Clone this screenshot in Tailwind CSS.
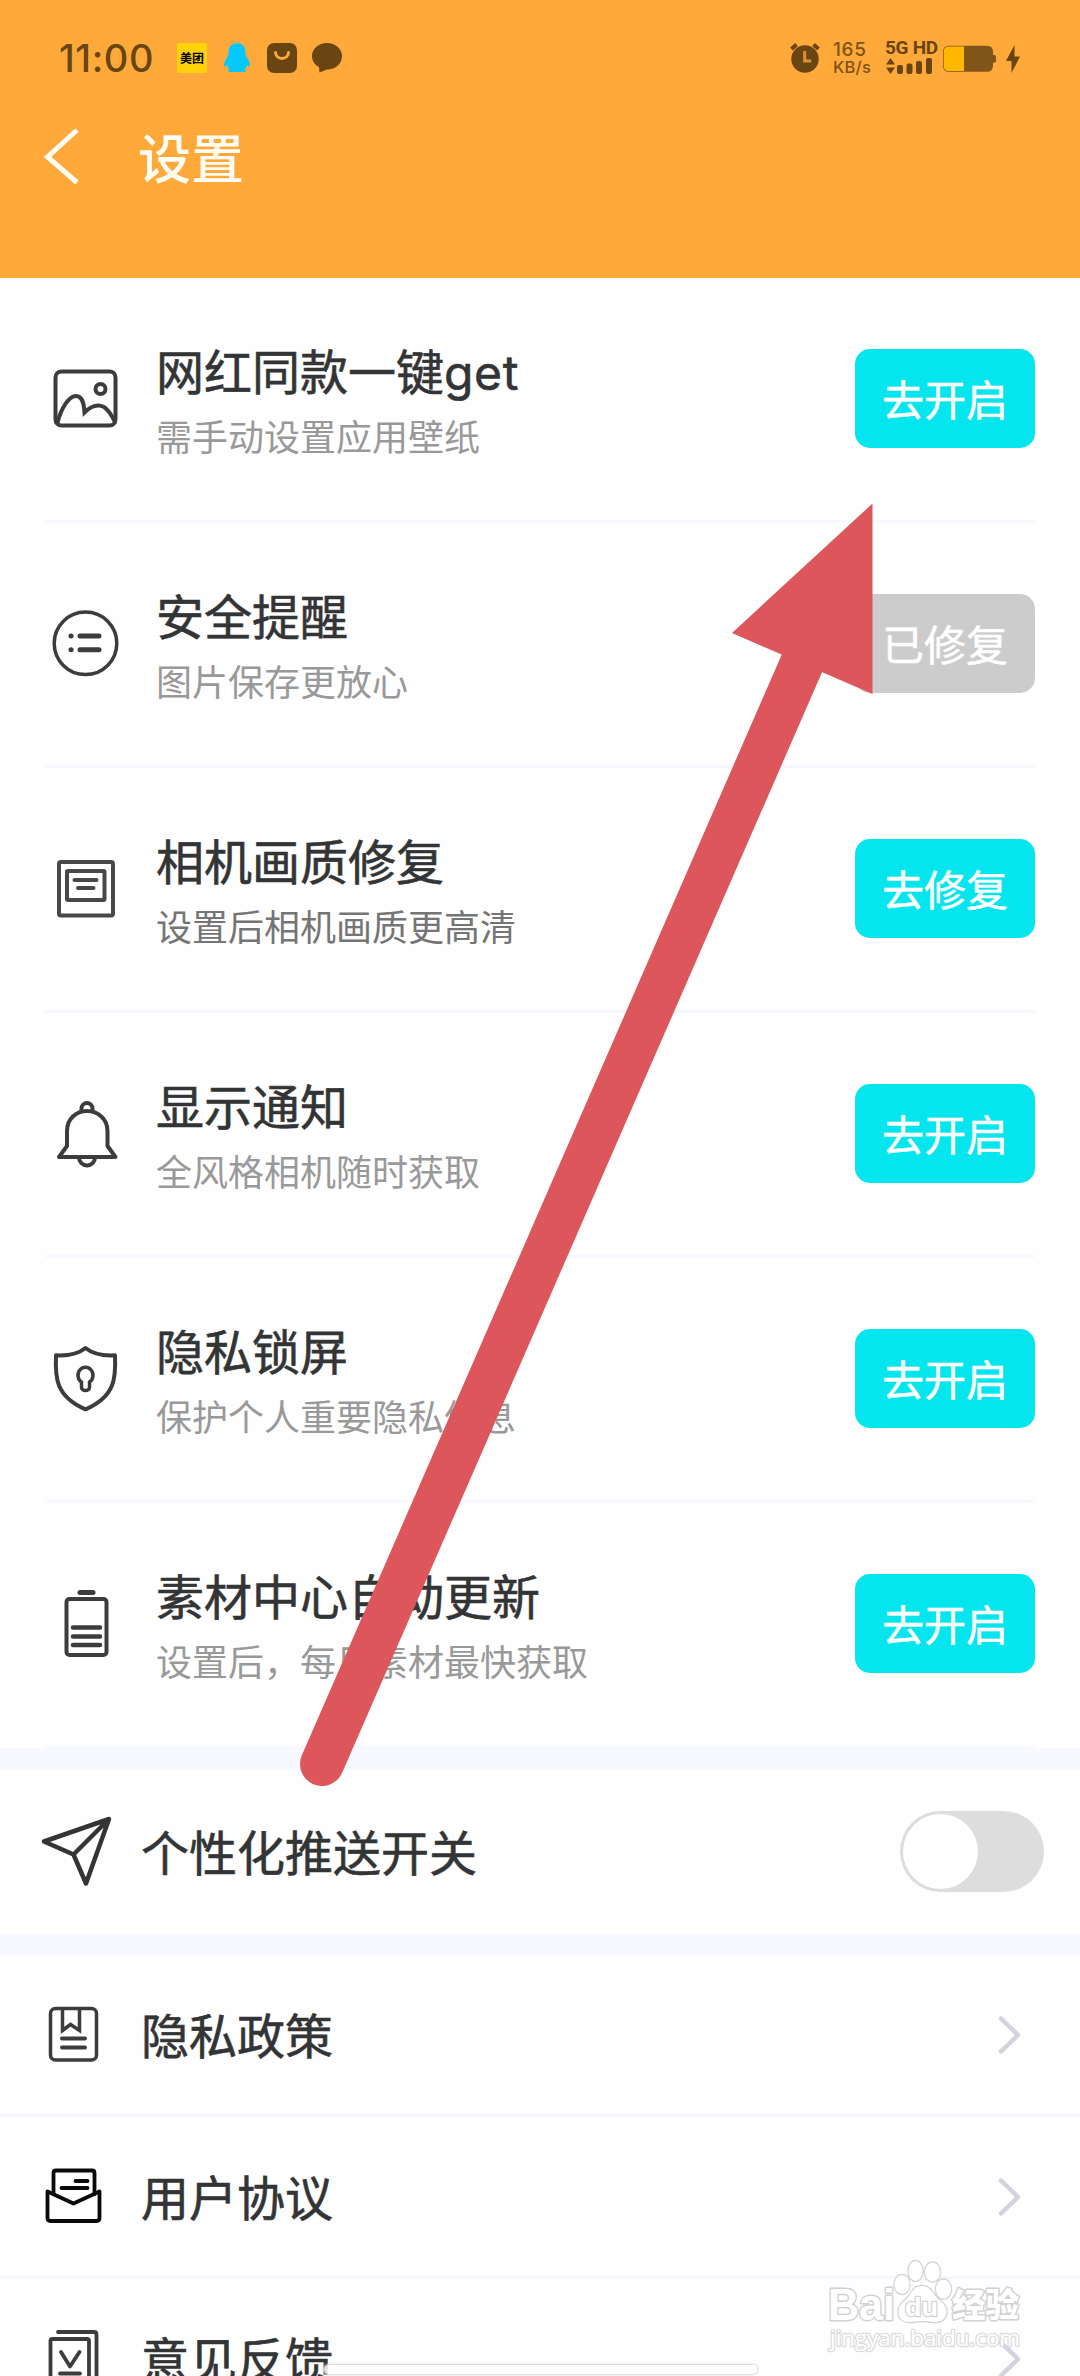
<!DOCTYPE html>
<html lang="zh-CN">
<head>
<meta charset="utf-8">
<title>设置</title>
<script src="https://cdn.jsdelivr.net/npm/@tailwindcss/browser@4"></script>
</head>
<body class="bg-[#fefefe] font-['Noto_Sans_CJK_SC',sans-serif] text-[#333436]">
<div class="relative w-[1080px] h-[2376px] overflow-hidden">

  <header class="h-[278px] bg-[#ffa93a]">
    <!-- status bar -->
    <div class="h-[116px] flex items-center justify-between pl-[59px] pr-[60px] text-[#694511]">
      <div class="flex items-center">
        <span class="w-[118px] font-[Inter,sans-serif] font-medium text-[38px] leading-none tracking-[0.6px]">11:00</span>
        <span class="w-[30px] h-[30px] rounded-[2px] bg-[#ffd20a] text-black text-[12px] font-bold leading-[30px] text-center">美团</span>
        <svg class="ml-4 w-[28px] h-[30px]" viewBox="0 0 28 30" fill="#06c8ff"><path d="M14 0C8.500 0 5.500 4 5.500 9v3C3.500 15 1 19 1 22c0 2 1.200 2 3 0 .5 2 1.200 3.200 2.500 4.300C5 27 4.500 29 6.500 29h15c2 0 1.500-2 0-2.700 1.300-1.100 2-2.300 2.500-4.300 1.800 2 3 2 3 0 0-3-2.500-7-4.500-10V9C22.500 4 19.500 0 14 0z"/></svg>
        <svg class="ml-4 w-[30px] h-[30px]" viewBox="0 0 30 30"><rect width="30" height="30" rx="7" fill="#694511"/><path d="M8.500 9.500a6.500 6 0 0 0 13 0" fill="none" stroke="#ffa93a" stroke-width="3" stroke-linecap="round"/></svg>
        <svg class="ml-[15px] w-[30px] h-[30px]" viewBox="0 0 30 30" fill="#694511"><path d="M15 0c8.300 0 15 5.800 15 13s-6 13.500-15 13.500L7.500 29.500 7 24C3 22 0 18 0 13 0 5.800 6.700 0 15 0z"/></svg>
      </div>
      <div class="flex items-center">
        <svg class="w-[30px] h-[30px]" viewBox="0 0 30 30"><circle cx="15" cy="16" r="13.700" fill="#694511"/><path d="M1.500 6 6.500 1.500M28.500 6 23.500 1.500" stroke="#694511" stroke-width="4"/><path d="M14.700 8v10h6.500" fill="none" stroke="#dc9135" stroke-width="3"/></svg>
        <div class="ml-[13px] w-[52px] font-[Inter,sans-serif] font-medium leading-[17px] text-[#7d5218]"><div class="text-[19px] tracking-[0.700px]">165</div><div class="text-[16.500px] tracking-[0.200px] pt-px">KB/s</div></div>
        <div class="w-[50px] -mt-[2px]">
          <div class="font-[Roboto,sans-serif] font-bold text-[19px] leading-[16px] whitespace-nowrap tracking-[-0.300px]">5G HD</div>
          <svg class="mt-px w-[50px] h-[18px]" viewBox="0 0 50 18" fill="#694511"><path d="M1 7.500 5.500 1 10 7.500zM1 10.500 5.500 17 10 10.500z"/><rect x="12" y="8" width="6" height="9" rx="2"/><rect x="21.500" y="6.500" width="6" height="10.500" rx="2"/><rect x="31" y="4" width="6" height="13" rx="2"/><rect x="41" y="1" width="6" height="16" rx="2"/></svg>
        </div>
        <svg class="ml-[7px] w-[55px] h-[28px] mt-[2px]" viewBox="0 0 55 28"><path d="M7 .8h38q6 0 6 6v3q3 0 3 2v4q0 2-3 2v3q0 6-6 6H7q-6 0-6-6v-14q0-6 6-6z" fill="#815519"/><path d="M22 1.500H7q-5.300 0-5.300 5.300v14q0 5.300 5.300 5.300h15z" fill="#ffb800"/></svg>
        <svg class="ml-2 -mr-px w-[16px] h-[28px] mt-[2px]" viewBox="0 0 16 28" fill="#694511"><path d="M9.500 0 1 16h5.500V28L15 11.500H9.500z"/></svg>
      </div>
    </div>
    <!-- title bar -->
    <div class="flex items-center h-[80px] pl-[42px] text-[#fffdf4]">
      <svg class="w-[40px] h-[60px]" viewBox="0 0 40 60" fill="none" stroke="currentColor" stroke-width="5"><path d="M35 4 5.500 31 35 56.500"/></svg>
      <h1 class="ml-[56px] text-[53px] leading-[60px] font-medium">设置</h1>
    </div>
  </header>

  <main>
    <section class="px-[45px]">
      <div class="h-[245px] border-b-3 border-[#f8f9fe] flex items-center">
        <svg class="ml-[5px] w-[72px] h-[72px] shrink-0" viewBox="50 363 72 72" fill="none" stroke="#3a3c3e" stroke-width="4"><rect x="55.500" y="371.500" width="60" height="54" rx="6"/><circle cx="100.500" cy="389" r="5"/><path d="M57.500 423C61 408 69 396 76 396c7 0 8 9 8.500 16.500C92 405 98 404 104 407c5 3 8 9 11 15"/></svg>
        <div class="ml-[34px] pt-[5px] flex-1"><div class="text-[48px] leading-[62px] -mt-1 [-webkit-text-stroke:0.6px_currentColor]">网红同款一键<span class="font-[Inter] text-[48px] leading-none tracking-[0.6px]">get</span></div><div class="text-[36px] leading-[52px] text-[#999] mt-[9px]">需手动设置应用壁纸</div></div>
        <button class="-mt-[2px] w-[180px] h-[99px] rounded-[15px] bg-[#05e5ed] text-white text-[42px] leading-none [-webkit-text-stroke:0.5px_white]">去开启</button>
      </div>
      <div class="h-[245px] border-b-3 border-[#f8f9fe] flex items-center">
        <svg class="ml-[5px] w-[72px] h-[72px] shrink-0" viewBox="50 608 72 72" fill="none" stroke="#3a3c3e" stroke-width="3.500" stroke-linecap="round"><circle cx="85.500" cy="643.300" r="31.300"/><path d="M80 636h19M80 649.700h19" stroke-width="5"/><path d="M71 636h.1M71 649.700h.1" stroke-width="5"/></svg>
        <div class="ml-[34px] pt-[5px] flex-1"><div class="text-[48px] leading-[62px] -mt-1 [-webkit-text-stroke:0.6px_currentColor]">安全提醒</div><div class="text-[36px] leading-[52px] text-[#999] mt-[9px]">图片保存更放心</div></div>
        <button class="-mt-[2px] w-[180px] h-[99px] rounded-[15px] bg-[#ccc] text-white text-[42px] leading-none [-webkit-text-stroke:0.5px_white]">已修复</button>
      </div>
      <div class="h-[245px] border-b-3 border-[#f5f9fe] flex items-center">
        <svg class="ml-[5px] w-[72px] h-[72px] shrink-0" viewBox="50 853 72 72" fill="none" stroke="#46484a" stroke-width="4" stroke-linecap="round"><rect x="59" y="862" width="54" height="53.500" rx="2"/><rect x="67" y="871" width="37.500" height="29" rx="1"/><path d="M74.500 880h22M78 888h15.500"/></svg>
        <div class="ml-[34px] pt-[5px] flex-1"><div class="text-[48px] leading-[62px] -mt-1 [-webkit-text-stroke:0.6px_currentColor]">相机画质修复</div><div class="text-[36px] leading-[52px] text-[#757575] mt-[9px]">设置后相机画质更高清</div></div>
        <button class="-mt-[2px] w-[180px] h-[99px] rounded-[15px] bg-[#05e5ed] text-white text-[42px] leading-none [-webkit-text-stroke:0.5px_white]">去修复</button>
      </div>
      <div class="h-[245px] border-b-3 border-[#f8f9fe] flex items-center">
        <svg class="ml-[5px] w-[72px] h-[72px] shrink-0" viewBox="50 1098 72 72" fill="none" stroke="#3a3c3e" stroke-width="4" stroke-linejoin="round"><path d="M67 1146v-15c0-12 9-20 20-20s20.500 8 20.500 20v15l8 11H59z"/><path d="M81.500 1111v-2.500a5.500 5.500 0 0 1 11 0v2.500M79 1157.500a8 8 0 0 0 16 0"/></svg>
        <div class="ml-[34px] pt-[5px] flex-1"><div class="text-[48px] leading-[62px] -mt-1 [-webkit-text-stroke:0.6px_currentColor]">显示通知</div><div class="text-[36px] leading-[52px] text-[#999] mt-[9px]">全风格相机随时获取</div></div>
        <button class="-mt-[2px] w-[180px] h-[99px] rounded-[15px] bg-[#05e5ed] text-white text-[42px] leading-none [-webkit-text-stroke:0.5px_white]">去开启</button>
      </div>
      <div class="h-[245px] border-b-3 border-[#f8f9fe] flex items-center">
        <svg class="ml-[5px] w-[72px] h-[72px] shrink-0" viewBox="50 1343 72 72" fill="none" stroke="#3a3c3e" stroke-width="4" stroke-linejoin="round"><path d="M85.500 1348c-8 6.500-17 8-29.500 7.300-1 22-.5 41 29.500 54 30-13 30.500-32 29.500-54-12.500.7-21.500-.8-29.500-7.300z"/><path d="M81.500 1382a7.500 8 0 1 1 8 0v5.500a4 3 0 0 1-8 0z" stroke-width="3.500"/></svg>
        <div class="ml-[34px] pt-[5px] flex-1"><div class="text-[48px] leading-[62px] -mt-1 [-webkit-text-stroke:0.6px_currentColor]">隐私锁屏</div><div class="text-[36px] leading-[52px] text-[#999] mt-[9px]">保护个人重要隐私信息</div></div>
        <button class="-mt-[2px] w-[180px] h-[99px] rounded-[15px] bg-[#05e5ed] text-white text-[42px] leading-none [-webkit-text-stroke:0.5px_white]">去开启</button>
      </div>
      <div class="h-[245px] border-b-3 border-[#f8f9fe] flex items-center">
        <svg class="ml-[5px] w-[72px] h-[72px] shrink-0" viewBox="50 1588 72 72" fill="none" stroke="#3a3c3e" stroke-width="4" stroke-linecap="round"><rect x="66.500" y="1599" width="40" height="56" rx="3"/><path d="M80 1592.500h13" stroke-width="5"/><path d="M73 1627.500h27M73 1636.500h27M73 1645h27" stroke-width="4.500"/></svg>
        <div class="ml-[34px] pt-[5px] flex-1"><div class="text-[48px] leading-[62px] -mt-1 [-webkit-text-stroke:0.6px_currentColor]">素材中心自动更新</div><div class="text-[36px] leading-[52px] text-[#999] mt-[9px]">设置后，每日素材最快获取</div></div>
        <button class="-mt-[2px] w-[180px] h-[99px] rounded-[15px] bg-[#05e5ed] text-white text-[42px] leading-none [-webkit-text-stroke:0.5px_white]">去开启</button>
      </div>
    </section>

    <section class="h-[207px] border-y-[21px] border-[#f8f9fe] flex items-center pl-[41px] pr-9">
      <svg class="w-[72px] h-[72px]" viewBox="41 1816 72 72" fill="none" stroke="#333436" stroke-width="4.500" stroke-linejoin="round"><path d="M109 1819 44 1841.500 73.500 1854.500 86 1883.500zL73.500 1854.500"/></svg>
      <div class="ml-[28px] -mt-[3px] flex-1 text-[48px] leading-[62px] [-webkit-text-stroke:0.6px_currentColor]">个性化推送开关</div>
      <div class="w-36 h-[81px] rounded-full bg-[#ddd] p-[3px]"><div class="size-[75px] rounded-full bg-white"></div></div>
    </section>

    <section>
      <div class="h-[162px] border-b-3 border-[#f4f8fd] flex items-center pl-[41px] pr-[59px]">
        <svg class="w-[64px] h-[64px]" viewBox="41 2003 64 64" fill="none" stroke="#3a3c3e" stroke-width="3.500" stroke-linecap="round"><rect x="50.500" y="2008.500" width="46" height="51.500" rx="5"/><path d="M62.500 2009v21.500l8-6 9 6V2009" /><path d="M62 2038.500h23M62 2047.500h23" stroke-width="4"/></svg>
        <div class="ml-[36px] -mt-[3px] flex-1 text-[48px] leading-[62px] [-webkit-text-stroke:0.6px_currentColor]">隐私政策</div>
        <svg class="w-6 h-10" viewBox="0 0 24 40" fill="none" stroke="#d3d3df" stroke-width="4.500" stroke-linecap="round" stroke-linejoin="round"><path d="M4 3.500 21 20 4 36.500"/></svg>
      </div>
      <div class="h-[162px] border-b-3 border-[#f4f8fd] flex items-center pl-[41px] pr-[59px]">
        <svg class="w-[64px] h-[64px]" viewBox="41 2165 64 64" fill="none" stroke="#0a0a0a" stroke-width="3.800" stroke-linecap="round" stroke-linejoin="round"><path d="M53.500 2194v-21q0-2.500 2.500-2.500h36q2.500 0 2.500 2.500v21"/><path d="M47.500 2191.500 73.500 2203.500 99.500 2191.500V2218q0 3-3 3h-46q-3 0-3-3z"/><path d="M75.500 2181h12M61.500 2188h26"/></svg>
        <div class="ml-[36px] -mt-[3px] flex-1 text-[48px] leading-[62px] [-webkit-text-stroke:0.6px_currentColor]">用户协议</div>
        <svg class="w-6 h-10" viewBox="0 0 24 40" fill="none" stroke="#d3d3df" stroke-width="4.500" stroke-linecap="round" stroke-linejoin="round"><path d="M4 3.500 21 20 4 36.500"/></svg>
      </div>
      <div class="h-[162px] border-b-3 border-[#f4f8fd] flex items-center pl-[41px] pr-[59px]">
        <svg class="w-[64px] h-[64px]" viewBox="41 2327 64 64" fill="none" stroke="#3a3c3e" stroke-width="3.800" stroke-linecap="round" stroke-linejoin="round"><rect x="50.500" y="2339" width="38.500" height="46" rx="2"/><path d="M58 2332h36q2.500 0 2.500 2.500V2380M61 2352l9 14.500 9.500-14.500M60 2373.500h20"/></svg>
        <div class="ml-[36px] -mt-[3px] flex-1 text-[48px] leading-[62px] [-webkit-text-stroke:0.6px_currentColor]">意见反馈</div>
        <svg class="w-6 h-10" viewBox="0 0 24 40" fill="none" stroke="#d3d3df" stroke-width="4.500" stroke-linecap="round" stroke-linejoin="round"><path d="M4 3.500 21 20 4 36.500"/></svg>
      </div>
    </section>
  </main>

  <!-- gesture bar -->
  <div class="absolute left-[324px] top-[2365px] w-[433px] h-[9px] rounded-full bg-white/85 shadow-[0_0_2px_1px_#d4d4d4]"></div>

  <!-- watermark -->
  <svg class="absolute left-[820px] top-[2250px] w-[210px] h-[120px]" viewBox="820 2250 210 120" fill="#fff" stroke="#d2d2d2" stroke-width="2" paint-order="stroke" stroke-linejoin="round">
    <text x="828" y="2320" font-family="Liberation Sans" font-weight="700" font-size="44" textLength="67" lengthAdjust="spacingAndGlyphs" stroke-width="3">Bai</text>
    <g stroke-width="2.500"><ellipse cx="902" cy="2284.500" rx="7.500" ry="9.500"/><ellipse cx="915.500" cy="2271" rx="7" ry="10"/><ellipse cx="932.500" cy="2272" rx="7.500" ry="9.500"/><ellipse cx="943.500" cy="2289" rx="7.500" ry="9.500"/>
    <path d="M922 2286c-7 0-10 5-13 10-4 5-10.500 8-10.500 16 0 7 5 10 11 10 5 0 8-1 13-1s8 1 13 1c6 0 11-4 11-10 0-8-7-11-11-16-4-5-6.500-10-13.500-10z"/></g>
    <text x="905" y="2316" font-family="Liberation Sans" font-weight="700" font-size="26" textLength="33" lengthAdjust="spacingAndGlyphs" stroke-width="2.500">du</text>
    <text x="952" y="2317" font-family="Noto Sans CJK SC" font-weight="900" font-size="33" textLength="67" lengthAdjust="spacingAndGlyphs" stroke-width="3">经验</text>
    <text x="830" y="2346" font-family="Open Sans" font-size="21" textLength="190" lengthAdjust="spacingAndGlyphs" stroke="#dcdcdc" stroke-width="2.500">jingyan.baidu.com</text>
  </svg>

  <!-- pointer arrow -->
  <svg class="absolute left-0 top-0 w-[1080px] h-[2376px] pointer-events-none" viewBox="0 0 1080 2376"><path d="M322 1764 806 654" stroke="#dc565b" stroke-width="44" stroke-linecap="round"/><path d="M872.500 503.500V694L732 633z" fill="#dc565b"/></svg>
</div>
</body>
</html>
